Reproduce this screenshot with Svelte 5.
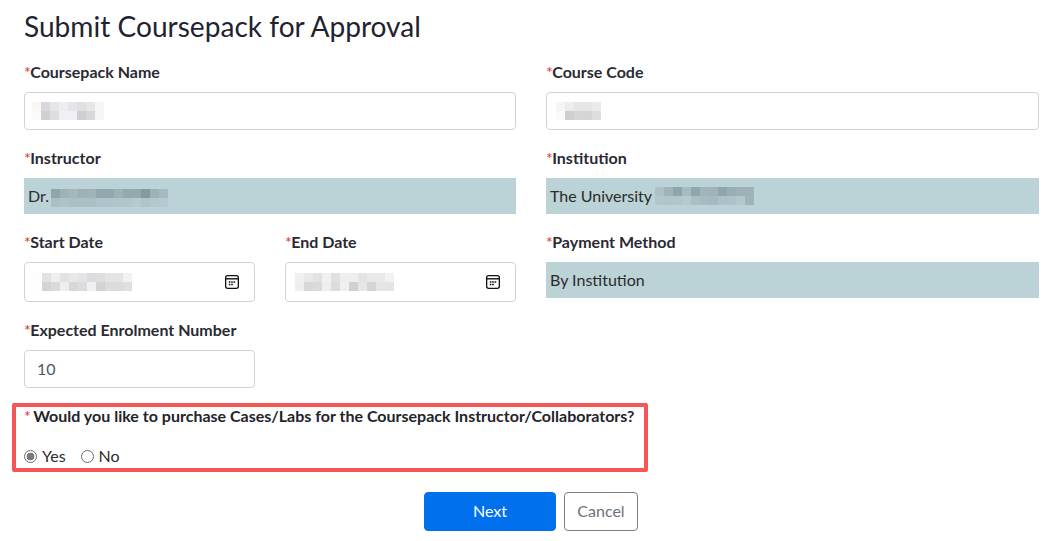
<script lang="ts">
	// redacted values in the reference, two rows of pixel blocks
	const smudges = {
		name: [
			['#faf6f5', '#d8d8dc', '#e6e6e9', '#eceef1', '#e6e6e8', '#e0dfe1', '#e6e6e8', '#f5f5f6'],
			['#fdf9f8', '#cfcfd3', '#dddcde', '#eef0f3', '#eef0f3', '#cfcfd3', '#d8d8da', '#f5f5f6']
		],
		code: [
			['#f7f5f4', '#eeeded', '#e6e6e7', '#e6e6e7', '#ebebec'],
			['#fbfaf9', '#cdd0d3', '#d7d6d6', '#d3d5d7', '#dcdee0']
		],
		instructor: [
			['#8ea5aa', '#9fb2b0', '#a3b8bc', '#9cb1b6', '#9fb3b8', '#91a8ae', '#91a8ae', '#9db2b7', '#92a9ae', '#92a9ae', '#84999d', '#9db2b7', '#a5bac0'],
			['#a9bfc4', '#adc3c8', '#a9bfc4', '#aac0c5', '#a9bfc4', '#aec4c9', '#aec4c9', '#afc5ca', '#b0c6cb', '#b4cace', '#aec4c9', '#b2c8cd', '#b4cace']
		],
		institution: [
			['#acc1c5', '#9fb4b9', '#8ea5ac', '#a6bbbf', '#8fa6ad', '#a0b5ba', '#a0b3b8', '#8fa6ad', '#9aafb5', '#9db2b8', '#9db2b8'],
			['#b2c7cb', '#afc5ca', '#b0c6cb', '#b4cace', '#a9bfc4', '#a6bcc1', '#a4bac0', '#acc2c7', '#aec2c7', '#b4c9cc', '#9fb3b9']
		],
		start: [
			['#fdfdfc', '#e2e2e3', '#eeeeef', '#e2e2e3', '#e8e8e9', '#e4e4e5', '#dcdcde', '#dfdfe0', '#e4e4e5', '#e4e4e5', '#f2f2f3'],
			['#fefefe', '#d3d4d6', '#dadadc', '#eeeef0', '#d8d8da', '#dcdcde', '#eff0f1', '#d2d3d6', '#dcdcdc', '#dcdcdc', '#dde0e2']
		],
		end: [
			['#f1f0ef', '#e9e8e8', '#e2e2e3', '#f0f0f1', '#e0e0e1', '#eeeeef', '#eeeeef', '#e4e4e5', '#e9e9ea', '#e9e9ea', '#f2f2f3'],
			['#efeeed', '#d8d7d6', '#dcdbda', '#eeeff0', '#dcdcdd', '#eeeff0', '#ced0d3', '#e6e6e6', '#d5d5d7', '#e4e5e7', '#e4e5e7']
		]
	};
</script>

{#snippet smudge(rows: string[][], cls = '')}
	<span class="smudge {cls}">
		{#each rows as row}
			<span class="smudge-row">
				{#each row as colour}
					<span class="cell" style="background: {colour}"></span>
				{/each}
			</span>
		{/each}
	</span>
{/snippet}

{#snippet label(text: string)}
	<div class="label"><span class="req">*</span>{text}</div>
{/snippet}

{#snippet calendar()}
	<svg class="calendar" viewBox="0 0 14 14" aria-hidden="true">
		<rect x="0.65" y="0.65" width="12.7" height="12.7" rx="2" />
		<path class="bar" d="M0.6 3.8h12.8" />
		<path class="dots" d="M3.8 7h1.6M6.2 7h1.6M8.6 7h1.6M3.8 9.5h1.6M6.2 9.5h1.6" />
	</svg>
{/snippet}

<main class="page">
	<h1>Submit Coursepack for Approval</h1>

	<div class="row">
		<div class="field">
			{@render label('Coursepack Name')}
			<div class="input">{@render smudge(smudges.name, 'name')}</div>
		</div>
		<div class="field">
			{@render label('Course Code')}
			<div class="input">{@render smudge(smudges.code, 'code')}</div>
		</div>
	</div>

	<div class="row">
		<div class="field">
			{@render label('Instructor')}
			<div class="readonly">
				<span class="flush">Dr.</span>{@render smudge(smudges.instructor, 'instructor')}
			</div>
		</div>
		<div class="field">
			{@render label('Institution')}
			<div class="readonly">The University{@render smudge(smudges.institution, 'institution')}</div>
		</div>
	</div>

	<div class="row">
		<div class="dates">
			<div class="field">
				{@render label('Start Date')}
				<div class="input date">
					{@render smudge(smudges.start, 'start')}
					{@render calendar()}
				</div>
			</div>
			<div class="field">
				{@render label('End Date')}
				<div class="input date">
					{@render smudge(smudges.end, 'end')}
					{@render calendar()}
				</div>
			</div>
		</div>
		<div class="field">
			{@render label('Payment Method')}
			<div class="readonly">By Institution</div>
		</div>
	</div>

	<div class="row">
		<div class="dates">
			<div class="field">
				{@render label('Expected Enrolment Number')}
				<div class="input number">10</div>
			</div>
		</div>
	</div>

	<section class="question">
		<div class="question-text"><span class="req">*</span> Would you like to purchase Cases/Labs for the Coursepack Instructor/Collaborators?</div>
		<div class="options">
			<span class="option"><span class="radio checked"></span>Yes</span>
			<span class="option"><span class="radio"></span>No</span>
		</div>
	</section>

	<div class="actions">
		<button class="next" type="button">Next</button>
		<button class="cancel" type="button">Cancel</button>
	</div>
</main>

<style>
	:global(body) {
		margin: 0;
		background: #fff;
	}

	.page {
		box-sizing: border-box;
		width: 1057px;
		padding: 0 18px 0 24px;
		font-family: Lato, 'Liberation Sans', sans-serif;
		font-size: 16px;
		line-height: 20px;
		color: #2b2b2b;
	}

	h1 {
		margin: 0;
		height: 62px;
		padding-top: 8px;
		box-sizing: border-box;
		font-size: 28.1px;
		line-height: 36px;
		font-weight: 400;
		color: #1f2330;
	}

	.row {
		display: grid;
		grid-template-columns: 492px 1fr;
		gap: 30px;
	}

	.dates {
		display: grid;
		grid-template-columns: 1fr 1fr;
		gap: 30px;
	}

	.page > .row + .row {
		margin-top: 18px;
	}

	.label {
		margin-bottom: 10px;
		font-weight: 700;
		white-space: nowrap;
		color: #2a2a33;
	}

	.label .req {
		margin-right: -0.6px;
	}

	.req {
		font-weight: 400;
		color: #e0312f;
	}

	.input {
		box-sizing: border-box;
		display: flex;
		align-items: center;
		height: 38px;
		padding: 0 12px;
		border: 1px solid #cfd3d8;
		border-radius: 4px;
		background: #fff;
	}

	.date {
		height: 40px;
		justify-content: space-between;
		padding-right: 15px;
	}

	.number {
		color: #4f5560;
	}

	.readonly {
		display: flex;
		align-items: center;
		height: 36px;
		padding-left: 4px;
		background: #bbd2d6;
		color: #2b2b2b;
	}

	.flush {
		margin-left: -4px;
		padding-left: 4px;
	}

	.calendar {
		width: 14px;
		height: 14px;
		fill: none;
		stroke: #111;
		stroke-width: 1.3;
	}

	.bar {
		stroke-width: 1.4;
	}

	.dots {
		stroke-width: 1.4;
	}

	.smudge {
		display: inline-flex;
		flex-direction: column;
		filter: blur(0.4px);
	}

	.smudge-row {
		display: flex;
	}

	.cell {
		display: block;
		width: 9px;
		height: 9px;
	}

	.name {
		margin-left: -5px;
	}

	.code {
		margin-left: -3px;
	}

	.instructor {
		margin: 3px 0 0 2px;
	}

	.institution {
		margin: 0 0 0 3px;
	}

	.start {
		margin-left: -4px;
	}

	.end {
		margin-left: -3px;
	}

	.question {
		box-sizing: border-box;
		height: 69px;
		margin: 15px 0 0 -12px;
		width: 636px;
		padding: 0 8px;
		border: 4px solid #f55658;
		border-radius: 2px;
	}

	.question-text {
		margin-top: -1px;
		font-weight: 700;
		white-space: nowrap;
		word-spacing: 0.03px;
		color: #23232b;
	}

	.question-text .req {
		margin-right: -1.4px;
	}

	.options {
		display: flex;
		gap: 15px;
		margin-top: 20px;
	}

	.option {
		display: inline-flex;
		align-items: center;
		gap: 5px;
	}

	.radio {
		box-sizing: border-box;
		width: 13px;
		height: 13px;
		border: 1px solid #6b6b6b;
		border-radius: 50%;
		background: #fff;
	}

	.checked {
		background: radial-gradient(circle, #7a7a7a 0 3.6px, #fff 4.2px);
	}

	.actions {
		display: flex;
		gap: 8px;
		margin: 20px 0 0 400px;
	}

	button {
		box-sizing: border-box;
		height: 39px;
		padding: 0 0 2px;
		border-radius: 4px;
		font: inherit;
		font-size: 16px;
	}

	.next {
		width: 132px;
		border: 1px solid #0070ec;
		background: #0070ec;
		color: #fff;
	}

	.cancel {
		width: 74px;
		border: 1px solid #7a7f85;
		background: #fff;
		color: #6b7178;
	}
</style>
